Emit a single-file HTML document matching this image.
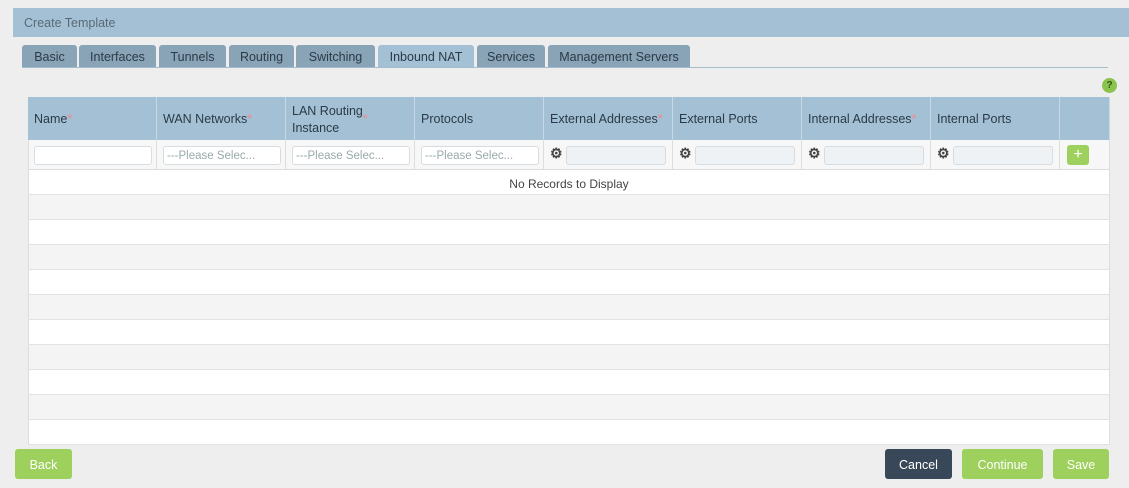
<!DOCTYPE html>
<html><head><style>
*{box-sizing:border-box;margin:0;padding:0}
body{width:1129px;height:488px;background:#eeeeee;font-family:"Liberation Sans",sans-serif;font-size:12px;color:#333;position:relative;overflow:hidden}
.a{position:absolute}
.hdr{left:13px;top:8px;width:1116px;height:29px;background:#a3c0d4;color:#5a6a78;font-size:12.5px;padding:8px 0 0 11px}
.tab{top:45px;height:22px;background:#89a3b7;border-radius:3px 3px 0 0;text-align:center;font-size:12.5px;color:#2b3a47;padding-top:5px}
.tab.on{background:#a3c0d4}
.line{left:22px;top:67px;width:1086px;height:1px;background:#a3bccd}
.th{top:97px;height:43px;background:#a3c0d4;border-right:1px solid #c9d8e2;font-size:12.5px;color:#2b3a47;padding:2px 6px 0;display:flex;align-items:center;line-height:17px}
.st{color:#f08a8a}
.fr{top:140px;height:30px;background:#f7f7f7;border-right:1px solid #ddd;border-bottom:1px solid #ddd}
.in{top:146px;height:19px;background:#fff;border:1px solid #d6dde2;border-radius:3px;font-size:11.5px;color:#9aa;padding:3px 3px 0}
.in2{top:146px;height:19px;background:#eef2f5;border:1px solid #d6dde2;border-radius:3px}
.g{font-size:14px;color:#444;top:145px;font-weight:bold}
.row{left:28px;width:1082px;height:25px;border-bottom:1px solid #e2e2e2;border-left:1px solid #ddd;border-right:1px solid #ddd}
.btn{top:449px;height:30px;border-radius:3px;color:#fff;font-size:12.5px;text-align:center;padding-top:9px;background:#9dd05c}
</style></head><body>
<div class="a hdr">Create Template</div>
<div class="a tab" style="left:22px;width:55px">Basic</div>
<div class="a tab" style="left:79px;width:77px">Interfaces</div>
<div class="a tab" style="left:159px;width:67px">Tunnels</div>
<div class="a tab" style="left:229px;width:65px">Routing</div>
<div class="a tab" style="left:296px;width:79px">Switching</div>
<div class="a tab on" style="left:378px;width:96px">Inbound NAT</div>
<div class="a tab" style="left:477px;width:68px">Services</div>
<div class="a tab" style="left:548px;width:142px">Management Servers</div>
<div class="a line"></div>
<div class="a" style="left:1102px;top:78px;width:15px;height:15px;border-radius:50%;background:#8cc34f;color:#2d5a10;font-size:10px;font-weight:bold;text-align:center;line-height:15px">?</div>
<div class="a" style="left:28px;top:97px;width:1082px;height:1px;background:#ddd"></div>
<div class="a th" style="left:28px;width:129px">Name<span class="st">*</span></div>
<div class="a th" style="left:157px;width:129px">WAN Networks<span class="st">*</span></div>
<div class="a th" style="left:286px;width:129px">LAN Routing<br>Instance<span class="st">*</span></div>
<div class="a th" style="left:415px;width:129px">Protocols</div>
<div class="a th" style="left:544px;width:129px">External Addresses<span class="st">*</span></div>
<div class="a th" style="left:673px;width:129px">External Ports</div>
<div class="a th" style="left:802px;width:129px">Internal Addresses<span class="st">*</span></div>
<div class="a th" style="left:931px;width:129px">Internal Ports</div>
<div class="a th" style="left:1060px;width:50px"></div>
<div class="a fr" style="left:28px;width:129px;border-left:1px solid #ddd"></div>
<div class="a fr" style="left:157px;width:129px"></div>
<div class="a fr" style="left:286px;width:129px"></div>
<div class="a fr" style="left:415px;width:129px"></div>
<div class="a fr" style="left:544px;width:129px"></div>
<div class="a fr" style="left:673px;width:129px"></div>
<div class="a fr" style="left:802px;width:129px"></div>
<div class="a fr" style="left:931px;width:129px"></div>
<div class="a fr" style="left:1060px;width:50px"></div>
<div class="a in" style="left:34px;width:118px"></div>
<div class="a in" style="left:163px;width:118px">---Please Selec...</div>
<div class="a in" style="left:292px;width:118px">---Please Selec...</div>
<div class="a in" style="left:421px;width:118px">---Please Selec...</div>
<div class="a g" style="left:550px">⚙</div><div class="a in2" style="left:566px;width:100px"></div>
<div class="a g" style="left:679px">⚙</div><div class="a in2" style="left:695px;width:100px"></div>
<div class="a g" style="left:808px">⚙</div><div class="a in2" style="left:824px;width:100px"></div>
<div class="a g" style="left:937px">⚙</div><div class="a in2" style="left:953px;width:100px"></div>
<div class="a" style="left:1067px;top:145px;width:22px;height:20px;background:#9dd05c;border-radius:3px;color:#fff;text-align:center;font-size:16px;line-height:20px">+</div>
<div class="a row" style="top:170px;background:#fff;text-align:center;padding-top:7px;color:#444">No Records to Display</div>
<div class="a row" style="top:195px;background:#f4f4f4"></div>
<div class="a row" style="top:220px;background:#fff"></div>
<div class="a row" style="top:245px;background:#f4f4f4"></div>
<div class="a row" style="top:270px;background:#fff"></div>
<div class="a row" style="top:295px;background:#f4f4f4"></div>
<div class="a row" style="top:320px;background:#fff"></div>
<div class="a row" style="top:345px;background:#f4f4f4"></div>
<div class="a row" style="top:370px;background:#fff"></div>
<div class="a row" style="top:395px;background:#f4f4f4"></div>
<div class="a row" style="top:420px;background:#fff"></div>
<div class="a btn" style="left:15px;width:57px">Back</div>
<div class="a btn" style="left:885px;width:67px;background:#394858">Cancel</div>
<div class="a btn" style="left:962px;width:81px">Continue</div>
<div class="a btn" style="left:1053px;width:56px">Save</div>
</body></html>
